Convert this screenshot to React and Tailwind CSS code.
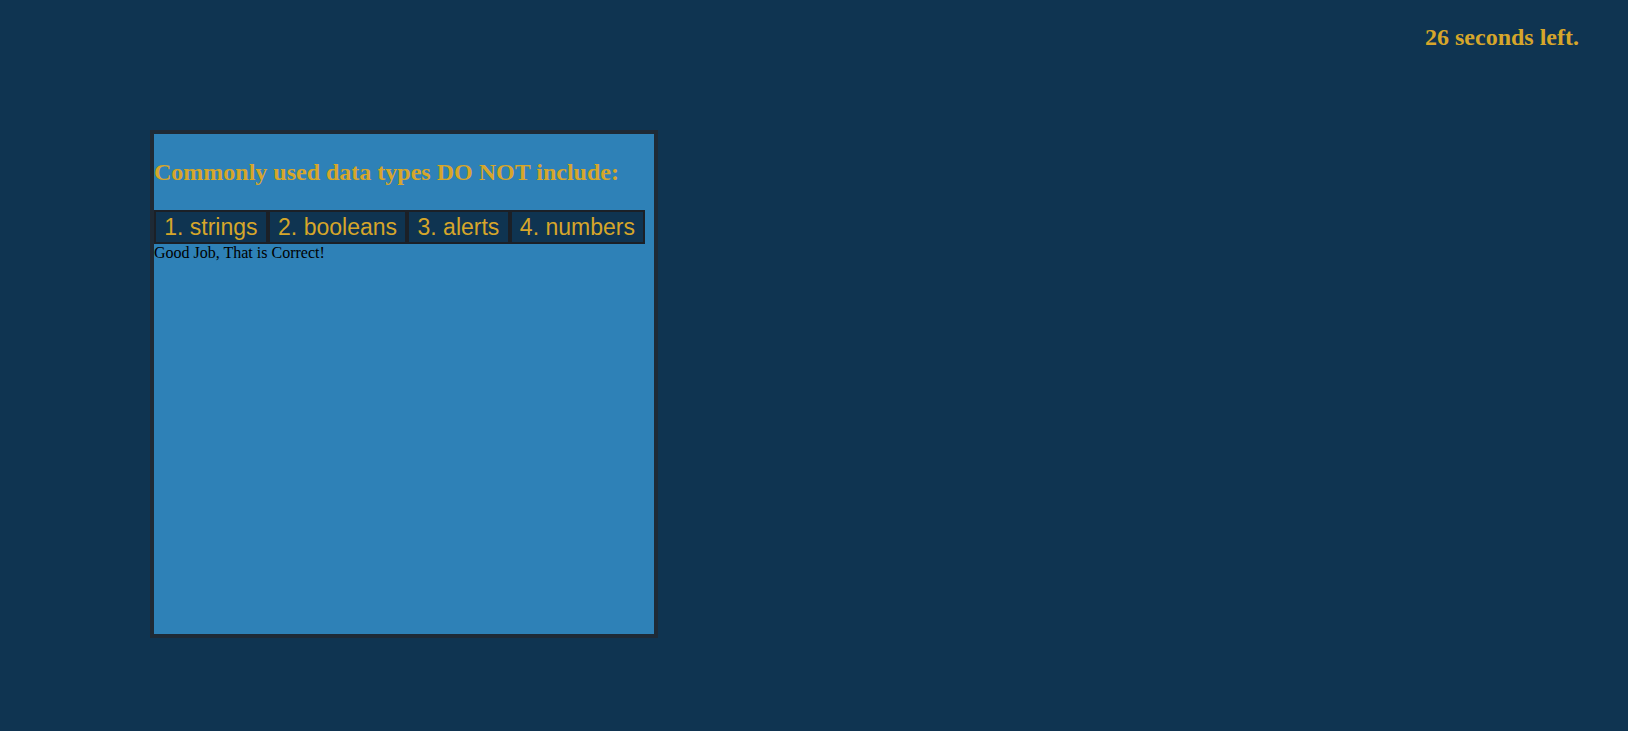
export default function App() {
  const answers = ["1. strings", "2. booleans", "3. alerts", "4. numbers"];
  return (
    <div className="min-h-screen w-full bg-[#0f3451] flex flex-col" style={{ fontFamily: '"Liberation Serif", serif' }}>
      <div className="flex justify-end pt-[24px] pr-[49px]">
        <div className="text-[24px] leading-[27px] font-bold text-[#d6a62a]">26 seconds left.</div>
      </div>
      <div className="ml-[150px] mt-[79px] w-[508px] h-[508px] border-4 border-[#1e2a36] bg-[#2e81b7] flex flex-col">
        <h2 className="mt-[25px] text-[24px] leading-[27px] font-bold text-[#d6a62a]">
          Commonly used data types DO NOT include:
        </h2>
        <div className="mt-[24px] flex">
          {answers.map((a) => (
            <button
              key={a}
              className="border-2 border-[#1b2027] bg-[#0f3451] text-[#d6a62a] text-[23px] leading-[26px] px-[8.25px] py-[2px]"
              style={{ fontFamily: '"Liberation Sans", Arial, sans-serif' }}
            >
              {a}
            </button>
          ))}
        </div>
        <div className="text-[16px] leading-[18px] text-black">Good Job, That is Correct!</div>
      </div>
    </div>
  );
}
